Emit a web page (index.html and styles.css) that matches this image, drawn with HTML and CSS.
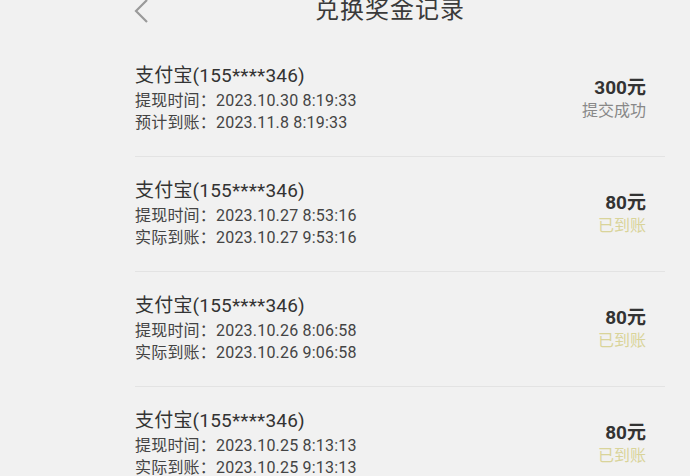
FILE: index.html
```html
<!DOCTYPE html>
<html lang="zh-CN">

<head>
    <meta charset="UTF-8">
    <meta name="viewport" content="width=device-width, initial-scale=1.0">
    <title>兑换奖金记录</title>

    <link rel="stylesheet" href="styles.css">
</head>

<body>
    <div id="header">
        <svg class="back" width="18" height="26" viewBox="0 0 18 26">
            <polyline points="15,0 4,11 15,22" fill="none" stroke="#9a9a9a" stroke-width="2.2" />
        </svg>
        <div class="title">兑换奖金记录</div>
    </div>

    <div id="list">
        <div class="record">
            <div class="info">
                <div class="account">支付宝(155****346)</div>
                <div class="line">提现时间：2023.10.30 8:19:33</div>
                <div class="line">预计到账：2023.11.8 8:19:33</div>
            </div>
            <div class="result">
                <div class="amount">300元</div>
                <div class="status">提交成功</div>
            </div>
        </div>
        <div class="record">
            <div class="info">
                <div class="account">支付宝(155****346)</div>
                <div class="line">提现时间：2023.10.27 8:53:16</div>
                <div class="line">实际到账：2023.10.27 9:53:16</div>
            </div>
            <div class="result">
                <div class="amount">80元</div>
                <div class="status done">已到账</div>
            </div>
        </div>
        <div class="record">
            <div class="info">
                <div class="account">支付宝(155****346)</div>
                <div class="line">提现时间：2023.10.26 8:06:58</div>
                <div class="line">实际到账：2023.10.26 9:06:58</div>
            </div>
            <div class="result">
                <div class="amount">80元</div>
                <div class="status done">已到账</div>
            </div>
        </div>
        <div class="record">
            <div class="info">
                <div class="account">支付宝(155****346)</div>
                <div class="line">提现时间：2023.10.25 8:13:13</div>
                <div class="line">实际到账：2023.10.25 9:13:13</div>
            </div>
            <div class="result">
                <div class="amount">80元</div>
                <div class="status done">已到账</div>
            </div>
        </div>
    </div>
</body>

</html>
```

FILE: styles.css
```css
* {
    margin: 0;
    padding: 0;
}

body {
    background-color: #f1f1f1;
    font-family: Roboto, "Noto Sans CJK SC", sans-serif;
    color: #333;
    overflow: hidden;
}

#header {
    height: 42px;
    display: flex;
    align-items: flex-start;
}

.back {
    margin-left: 132px;
    margin-top: 0;
}

.title {
    margin-left: 165px;
    margin-top: -2px;
    font-size: 24px;
    line-height: 24px;
    color: #3a3a3a;
    letter-spacing: 1px;
}

#list {
    margin-left: 135px;
    width: 530px;
}

.record {
    display: flex;
    justify-content: space-between;
    align-items: center;
    padding: 22px 19px 22px 0;
    border-bottom: 1px solid #e3e3e3;
}

.account {
    font-size: 19px;
    line-height: 24px;
    color: #333;
    letter-spacing: 0.2px;
    margin-bottom: 2px;
}

.line {
    font-size: 16px;
    line-height: 22px;
    color: #444;
    letter-spacing: 0.2px;
}

.result {
    text-align: right;
}

.amount {
    font-size: 19px;
    line-height: 24px;
    font-weight: bold;
    color: #333;
}

.status {
    font-size: 16px;
    line-height: 22px;
    color: #888;
}

.done {
    color: #d9d49a;
}
```
